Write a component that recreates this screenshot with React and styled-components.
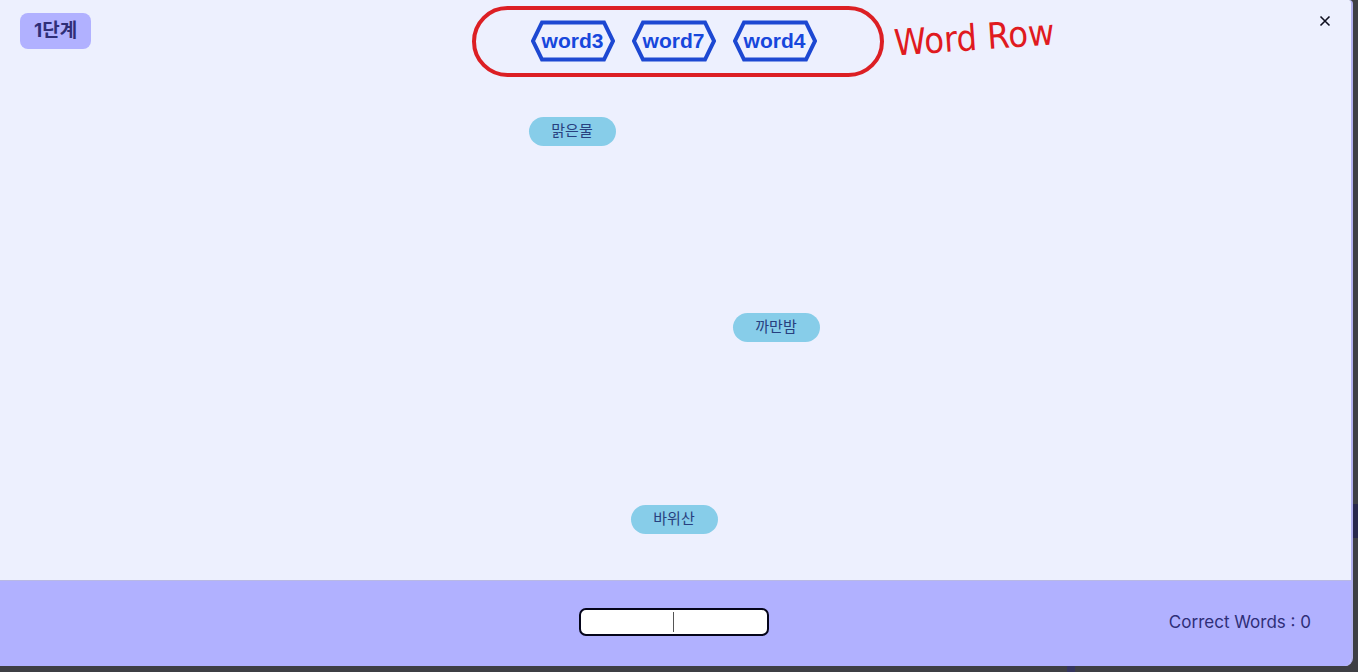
import React, { useState } from "react";
import styled, { createGlobalStyle } from "styled-components";

const GlobalStyle = createGlobalStyle`
  *, *::before, *::after { box-sizing: border-box; }
  body {
    margin: 0;
    font-family: Inter, "Noto Sans CJK KR", sans-serif;
    color: #2f2e78;
  }
`;

const Backdrop = styled.div`
  display: flex;
  min-height: 100vh;
  padding: 0 5px 6px 0;
  background:
    linear-gradient(#28284c, #28284c) right 0 top 79% / 5px 34px no-repeat,
    linear-gradient(#35355f, #35355f) left 79% bottom 0 / 8px 6px no-repeat,
    #3e3f44;
`;

const Modal = styled.main`
  flex: 1;
  display: flex;
  flex-direction: column;
  overflow: hidden;
  background: #edf0fe;
  border-right: 2px solid #b1b0ee;
  border-radius: 0 4px 8px 0;
`;

const Header = styled.header`
  display: grid;
  grid-template-columns: 1fr auto 1fr;
  align-items: start;
  padding: 6px 16px 0 20px;
`;

const Level = styled.h1`
  justify-self: start;
  margin: 7px 0 0;
  padding: 0 14px;
  border-radius: 8px;
  background: #b1b1ff;
  font-size: 19px;
  font-weight: 700;
  line-height: 36px;
`;

const WordRow = styled.div`
  display: flex;
  justify-content: center;
  align-items: center;
  gap: 17px;
  width: 412px;
  height: 71px;
  padding: 0 8px 2px 0;
  border: 4px solid #dc1f24;
  border-radius: 36px;
`;

const Hexagon = styled.div`
  display: grid;
  place-items: center;
  width: 84px;
  height: 42px;

  > * { grid-area: 1 / 1; }
`;

const HexLabel = styled.span`
  color: #1747dc;
  font: 700 21px/24px "Liberation Sans", sans-serif;
`;

const HeaderEnd = styled.div`
  display: flex;
  justify-content: space-between;
  align-items: flex-start;
`;

const Note = styled.span`
  margin-left: 10px;
  color: #e01a20;
  font: 400 36px/64px "DejaVu Sans Condensed", "DejaVu Sans", sans-serif;
  white-space: nowrap;
  transform: rotate(-4deg);
`;

const CloseButton = styled.button`
  display: grid;
  place-items: center;
  width: 20px;
  height: 20px;
  margin-top: 5px;
  padding: 0;
  border: 0;
  background: none;
  color: #101020;
  cursor: pointer;
`;

const Sky = styled.section`
  flex: 1;
  position: relative;
  min-height: 300px;
`;

const FallingWord = styled.div`
  position: absolute;
  top: ${(p) => p.$fallen}%;
  left: calc(50% + ${(p) => p.$lane} * 102px - 45px);
  width: 87px;
  padding-bottom: 2px;
  border-radius: 15px;
  background: #87cde9;
  color: #27407f;
  font-size: 15px;
  line-height: 27px;
  text-align: center;
`;

const Footer = styled.footer`
  display: grid;
  grid-template-columns: 1fr auto 1fr;
  align-items: center;
  min-height: 86px;
  padding: 0 40px 4px 36px;
  border-top: 1px solid #b9b9e4;
  background: #b1b1ff;
`;

const AnswerField = styled.label`
  grid-column: 2;
  display: grid;
  place-items: center;

  > * { grid-area: 1 / 1; }
`;

const AnswerInput = styled.input`
  width: 190px;
  height: 28px;
  padding: 0 8px;
  border: 2px solid #05051a;
  border-radius: 7px;
  outline: none;
  background: #fff;
  font: inherit;
  text-align: center;
  caret-color: transparent;
`;

const Caret = styled.span`
  width: 1px;
  height: 20px;
  background: #555;
  pointer-events: none;
`;

const Score = styled.span`
  justify-self: end;
  font-size: 17px;
  line-height: 24px;
`;

const targets = ["word3", "word7", "word4"];
const words = [
  { text: "맑은물", lane: -1, fallen: 8 },
  { text: "까만밤", lane: 1, fallen: 47 },
  { text: "바위산", lane: 0, fallen: 85 },
];

export default function App() {
  const [answer, setAnswer] = useState("");
  return (
    <>
      <GlobalStyle />
      <Backdrop>
        <Modal>
          <Header>
            <Level>1단계</Level>
            <WordRow>
              {targets.map((word) => (
                <Hexagon key={word}>
                  <svg width="84" height="42" viewBox="0 0 84 42" fill="none" aria-hidden="true">
                    <path d="M11 2.5H73L82 21L73 39.5H11L2 21Z" stroke="#1d48d2" strokeWidth="4" />
                  </svg>
                  <HexLabel>{word}</HexLabel>
                </Hexagon>
              ))}
            </WordRow>
            <HeaderEnd>
              <Note>Word Row</Note>
              <CloseButton type="button" aria-label="Close">
                <svg width="12" height="12" viewBox="0 0 12 12" fill="none" aria-hidden="true">
                  <path d="M1.5 1.5L10.5 10.5M10.5 1.5L1.5 10.5" stroke="currentColor" strokeWidth="1.6" />
                </svg>
              </CloseButton>
            </HeaderEnd>
          </Header>
          <Sky>
            {words.map((word) => (
              <FallingWord key={word.text} $lane={word.lane} $fallen={word.fallen}>
                {word.text}
              </FallingWord>
            ))}
          </Sky>
          <Footer>
            <AnswerField>
              <AnswerInput
                aria-label="Answer"
                value={answer}
                onChange={(e) => setAnswer(e.target.value)}
              />
              {answer === "" && <Caret />}
            </AnswerField>
            <Score>Correct Words : 0</Score>
          </Footer>
        </Modal>
      </Backdrop>
    </>
  );
}
